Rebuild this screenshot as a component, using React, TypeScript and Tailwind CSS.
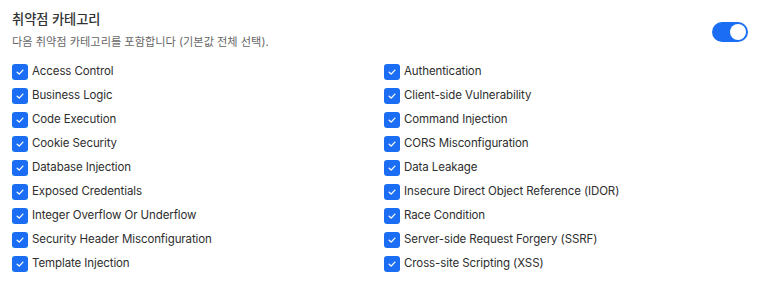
const LEFT = [
  "Access Control",
  "Business Logic",
  "Code Execution",
  "Cookie Security",
  "Database Injection",
  "Exposed Credentials",
  "Integer Overflow Or Underflow",
  "Security Header Misconfiguration",
  "Template Injection",
];

const RIGHT = [
  "Authentication",
  "Client-side Vulnerability",
  "Command Injection",
  "CORS Misconfiguration",
  "Data Leakage",
  "Insecure Direct Object Reference (IDOR)",
  "Race Condition",
  "Server-side Request Forgery (SSRF)",
  "Cross-site Scripting (XSS)",
];

function Check({ label }: { label: string }) {
  return (
    <label className="flex items-center gap-1 h-6">
      <span className="flex items-center justify-center w-4 h-4 rounded-[3px] bg-[#1b6ef3]">
        <svg width="10" height="10" viewBox="0 0 10 10" fill="none">
          <path d="M2.2 5.2L4.2 7.1L7.9 3.1" stroke="white" strokeWidth="1.3" strokeLinecap="round" strokeLinejoin="round" />
        </svg>
      </span>
      <span className="text-[11.5px] tracking-[-0.1px] text-[#2e2e2e]">{label}</span>
    </label>
  );
}

export default function App() {
  const rows = LEFT.flatMap((l, i) => [l, RIGHT[i]]);
  return (
    <div className="w-[760px] h-[284px] bg-white px-3 pt-[9px] font-['Inter','Noto_Sans_CJK_KR',sans-serif]">
      <div className="flex items-start justify-between">
        <div>
          <div className="text-[13.2px] font-medium text-[#333] leading-5">취약점 카테고리</div>
          <div className="text-[11.2px] text-[#666] leading-4 mt-[5px]">다음 취약점 카테고리를 포함합니다 (기본값 전체 선택).</div>
        </div>
        <button className="mt-[13px] w-9 h-5 rounded-full bg-[#1b6ef3] flex items-center justify-end px-[2px]">
          <span className="w-4 h-4 rounded-full bg-white" />
        </button>
      </div>
      <div className="grid grid-cols-2 gap-x-2 mt-[10px]">
        {rows.map((r) => (
          <Check key={r} label={r} />
        ))}
      </div>
    </div>
  );
}
